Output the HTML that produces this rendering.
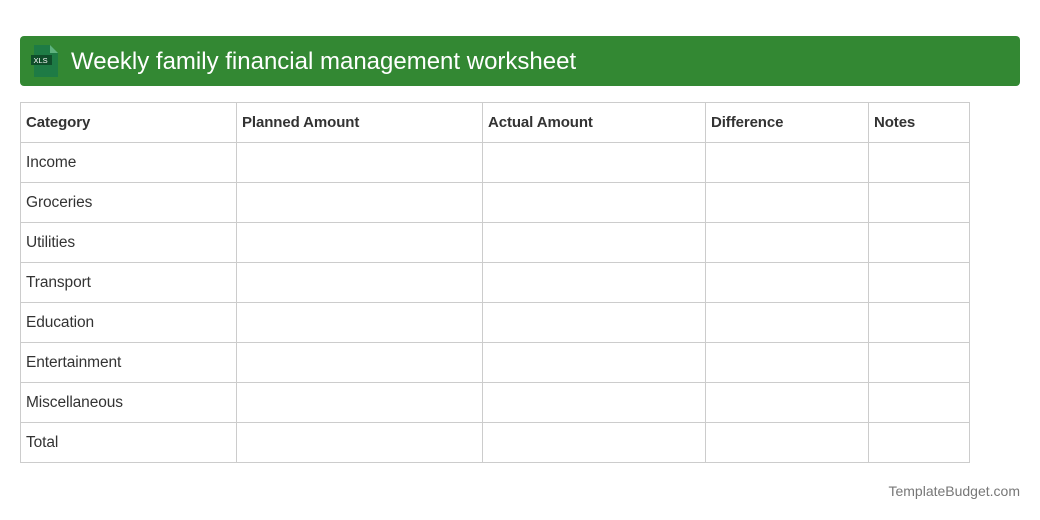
<!DOCTYPE html>
<html><head><style>
body{margin:0;width:1040px;height:520px;background:#fff;font-family:"Liberation Sans",Arial,sans-serif;position:relative;overflow:hidden}
.bar{position:absolute;left:20px;top:36px;width:1000px;height:50px;background:#338833;border-radius:4px}
.bar h1{position:absolute;left:51px;top:1px;margin:0;line-height:50px;font-size:24px;font-weight:normal;color:#fff}
table{position:absolute;left:20px;top:102px;border-collapse:collapse}
td,th{border:1px solid #ccc;height:39px;padding:0 0 0 5px;font-size:15.5px;color:#333;text-align:left;letter-spacing:-0.1px}
th{font-weight:bold;font-size:15px}
.f{position:absolute;right:20px;top:483px;font-size:14px;color:#777}
</style></head><body>
<div class="bar">
<svg style="position:absolute;left:10px;top:8px" width="30" height="34" viewBox="0 0 30 34">
<path d="M4 1h16l8 8v24H4z" fill="#1e7b45"/><path d="M20 1v8h8z" fill="#5fb37f"/>
<rect x="1" y="11" width="21" height="10" fill="#0f4d2a"/>
<text x="3.5" y="19" font-size="7.5" fill="#fff" font-family="Liberation Sans">XLS</text>
</svg>
<h1>Weekly family financial management worksheet</h1></div>
<table>
<tr><th style="width:210px">Category</th><th style="width:240px">Planned Amount</th><th style="width:217px">Actual Amount</th><th style="width:157px">Difference</th><th style="width:95px">Notes</th></tr>
<tr><td>Income</td><td></td><td></td><td></td><td></td></tr>
<tr><td>Groceries</td><td></td><td></td><td></td><td></td></tr>
<tr><td>Utilities</td><td></td><td></td><td></td><td></td></tr>
<tr><td>Transport</td><td></td><td></td><td></td><td></td></tr>
<tr><td>Education</td><td></td><td></td><td></td><td></td></tr>
<tr><td>Entertainment</td><td></td><td></td><td></td><td></td></tr>
<tr><td>Miscellaneous</td><td></td><td></td><td></td><td></td></tr>
<tr><td>Total</td><td></td><td></td><td></td><td></td></tr>
</table>
<div class="f">TemplateBudget.com</div>
</body></html>
